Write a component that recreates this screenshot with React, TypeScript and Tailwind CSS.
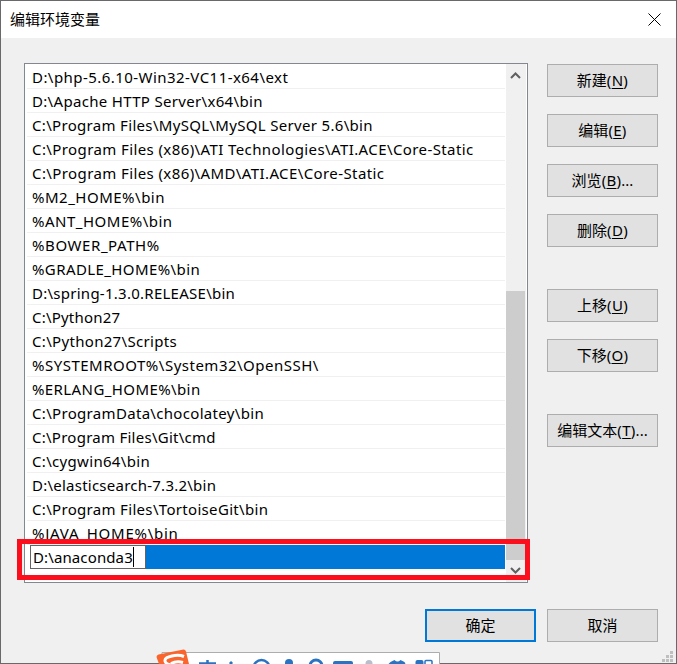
import type { ReactNode } from "react";

type PathEntry = { path: string; tracking: string };

const entries: PathEntry[] = [
  { path: "D:\\php-5.6.10-Win32-VC11-x64\\ext", tracking: "tracking-[0.45px]" },
  { path: "D:\\Apache HTTP Server\\x64\\bin", tracking: "tracking-[0.32px]" },
  { path: "C:\\Program Files\\MySQL\\MySQL Server 5.6\\bin", tracking: "tracking-[0.32px]" },
  {
    path: "C:\\Program Files (x86)\\ATI Technologies\\ATI.ACE\\Core-Static",
    tracking: "tracking-[0.4px]",
  },
  { path: "C:\\Program Files (x86)\\AMD\\ATI.ACE\\Core-Static", tracking: "tracking-[0.4px]" },
  { path: "%M2_HOME%\\bin", tracking: "tracking-[0.5px]" },
  { path: "%ANT_HOME%\\bin", tracking: "tracking-[0.5px]" },
  { path: "%BOWER_PATH%", tracking: "tracking-[0.58px]" },
  { path: "%GRADLE_HOME%\\bin", tracking: "tracking-[0.4px]" },
  { path: "D:\\spring-1.3.0.RELEASE\\bin", tracking: "tracking-[0.26px]" },
  { path: "C:\\Python27", tracking: "tracking-[0.2px]" },
  { path: "C:\\Python27\\Scripts", tracking: "tracking-[0.32px]" },
  { path: "%SYSTEMROOT%\\System32\\OpenSSH\\", tracking: "tracking-[0.5px]" },
  { path: "%ERLANG_HOME%\\bin", tracking: "tracking-[0.4px]" },
  { path: "C:\\ProgramData\\chocolatey\\bin", tracking: "tracking-[0.32px]" },
  { path: "C:\\Program Files\\Git\\cmd", tracking: "tracking-[0.26px]" },
  { path: "C:\\cygwin64\\bin", tracking: "tracking-[0.32px]" },
  { path: "D:\\elasticsearch-7.3.2\\bin", tracking: "tracking-[0.24px]" },
  { path: "C:\\Program Files\\TortoiseGit\\bin", tracking: "tracking-[0.32px]" },
  { path: "%JAVA_HOME%\\bin", tracking: "tracking-[0.75px]" },
];

type ButtonProps = {
  children: ReactNode;
  hotkey?: string;
  suffix?: string;
  primary?: boolean;
};

function DialogButton({ children, hotkey, suffix, primary }: ButtonProps) {
  return (
    <button
      type="button"
      className={
        primary
          ? "h-[33px] w-[111px] border-2 border-[#0078d7] bg-[#e1e1e1] text-[15px] leading-none"
          : "h-[33px] w-[111px] border border-[#adadad] bg-[#e1e1e1] text-[15px] leading-none"
      }
    >
      {children}
      {hotkey ? (
        <span className="tracking-[0.3px]">
          (<span className="underline decoration-1 underline-offset-2">{hotkey}</span>)
        </span>
      ) : null}
      {suffix}
    </button>
  );
}

function Scrollbar() {
  return (
    <div className="mr-px flex w-5 shrink-0 flex-col bg-[#f0f0f0]">
      <svg className="h-[23px] w-5" viewBox="0 0 20 23" fill="none">
        <path d="M5 14 9.5 9.5 14 14" stroke="#606060" strokeWidth="2" />
      </svg>
      <div className="mt-[204px] h-[269px] w-[19px] bg-[#cdcdcd]" />
      <svg className="h-[22px] w-5" viewBox="0 0 20 22" fill="none">
        <path d="M5 8 9.500 12.500 14 8" stroke="#606060" strokeWidth="2" />
      </svg>
    </div>
  );
}

function PathList() {
  return (
    <div className="relative flex h-[520px] w-[504px] border border-[#828790] bg-white">
      <ul className="min-w-0 flex-1 pt-px pl-0.5">
        {entries.map(({ path, tracking }) => (
          <li key={path} className="mr-px h-6 border-b border-[#f0f0f0] pl-[5px]">
            <span className={`text-[15px] leading-[24px] whitespace-pre ${tracking}`}>{path}</span>
          </li>
        ))}
        <li className="mr-px ml-[3px] flex h-6 bg-[#0078d7]">
          <div className="flex w-[116px] items-center border border-[#646464] bg-white pl-0.5 text-[15px] leading-[22px] tracking-[0.12px]">
            D:\anaconda3
            <span className="h-5 w-px bg-black" />
          </div>
        </li>
      </ul>
      <Scrollbar />
      {/* highlight round the entry being edited */}
      <div className="absolute top-[475px] -left-2 h-[41px] w-[513px] border-[5px] border-[#fb0f1c]" />
    </div>
  );
}

function InputMethodBar() {
  return (
    <svg
      className="absolute bottom-0 left-[152px] h-5 w-[288px]"
      viewBox="152 644 288 20"
      fill="none"
    >
      <path d="M162 652.5h277.5V665H162z" fill="#fff" stroke="#adadad" />
      <path d="M156.500 657q0-2 2-2.500l25-5q2 0 2.500 2l3 12.500h-30z" fill="#f9652d" />
      <path
        d="M184 656.500c-6-2.500-20-.5-19 4.500 .5 2.500 3 3.500 6 4M171 663.500c3-1.500 8-2 12-1"
        stroke="#fff"
        strokeWidth="3"
      />
      <g stroke="#2a72c2" strokeWidth="2.500">
        <path d="M199 663.500h17M207.500 660v4" />
        <path d="M230 662l2 2" strokeWidth="3" />
        <circle cx="261.500" cy="668" r="8" />
        <circle cx="316" cy="666" r="6" strokeWidth="3" />
        <path d="M426 660.500h5q1 0 1 1v4h-7v-4q0-1 1-1z" strokeWidth="1.500" />
      </g>
      <g fill="#2a72c2">
        <rect x="285" y="659" width="8" height="10" rx="4" />
        <rect x="333" y="661" width="20" height="6" rx="2" />
        <path d="M388.500 664l2-2 4-2q3 3 6 0l4 2 1 2z" />
        <rect x="415.500" y="660" width="8" height="8" rx="2" />
      </g>
      <circle cx="369" cy="663.500" r="3.500" fill="#b8bfcb" />
    </svg>
  );
}

function ResizeGrip() {
  return (
    <svg
      className="absolute right-[3px] bottom-px h-[11px] w-[11px]"
      viewBox="0 0 11 11"
      fill="#bfbfbf"
    >
      <path d="M8 0h3v3H8zM4 4h3v3H4zM8 4h3v3H8zM0 8h3v3H0zM4 8h3v3H4zM8 8h3v3H8z" />
    </svg>
  );
}

export default function App() {
  return (
    <div className="relative h-[664px] w-[677px] overflow-hidden font-['Noto_Sans','Noto_Sans_CJK_SC',sans-serif] text-black">
      <div className="relative h-full border border-[#69686b] bg-[#f0f0f0]">
        <header className="flex h-[37px] items-center justify-between bg-white pr-[15px] pl-[9px]">
          <h1 className="text-[15px] leading-none">编辑环境变量</h1>
          <svg className="h-[13px] w-[13px]" viewBox="0 0 13 13" fill="none" stroke="#000">
            <path d="M.5.5l12 12M12.500.5l-12 12" />
          </svg>
        </header>

        <main className="flex gap-[19px] pt-[25px] pl-[23px]">
          <PathList />
          <div className="flex flex-col gap-[17px] pt-px">
            <DialogButton hotkey="N">新建</DialogButton>
            <DialogButton hotkey="E">编辑</DialogButton>
            <DialogButton hotkey="B" suffix="...">
              浏览
            </DialogButton>
            <DialogButton hotkey="D">删除</DialogButton>
            <div className="mt-[25px] flex flex-col gap-[17px]">
              <DialogButton hotkey="U">上移</DialogButton>
              <DialogButton hotkey="O">下移</DialogButton>
            </div>
            <div className="mt-[25px]">
              <DialogButton hotkey="T" suffix="...">
                编辑文本
              </DialogButton>
            </div>
          </div>
        </main>

        <footer className="mt-[26px] flex justify-end gap-[11px] pr-[18px]">
          <DialogButton primary>确定</DialogButton>
          <DialogButton>取消</DialogButton>
        </footer>

        <ResizeGrip />
      </div>
      <InputMethodBar />
    </div>
  );
}
